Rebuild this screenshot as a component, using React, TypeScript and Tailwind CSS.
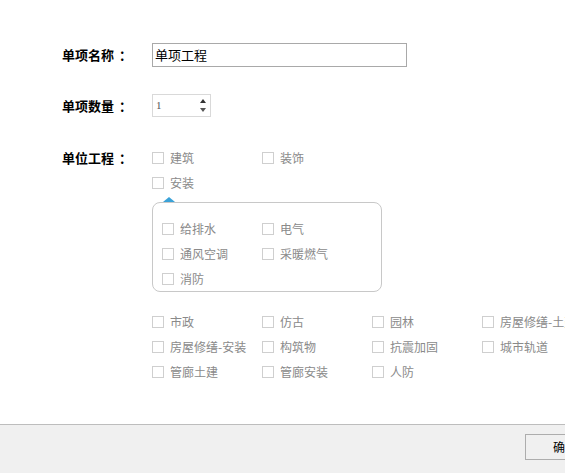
import React from 'react';

const font = { fontFamily: '"Noto Sans CJK SC", "Noto Sans", sans-serif' };

function Check({ label, w = 'w-[110px]' }: { label: string; w?: string }) {
  return (
    <label className={`flex h-[25px] ${w} shrink-0 items-center whitespace-nowrap text-[12px] text-[#8a8a8a]`}>
      <span className="mr-[6px] h-[12px] w-[12px] shrink-0 border border-[#cfcfcf] bg-white" />
      {label}
    </label>
  );
}

function FieldLabel({ text }: { text: string }) {
  return (
    <div className="flex w-[90px] shrink-0 items-center text-[13px] font-bold text-black">
      {text}
      <span className="ml-[5px]">：</span>
    </div>
  );
}

const topItems = ['建筑', '装饰', '安装'];
const installItems = ['给排水', '电气', '通风空调', '采暖燃气', '消防'];
const otherItems = [
  '市政', '仿古', '园林', '房屋修缮-土建',
  '房屋修缮-安装', '构筑物', '抗震加固', '城市轨道',
  '管廊土建', '管廊安装', '人防',
];

export default function App() {
  return (
    <div className="flex h-[473px] w-[565px] flex-col overflow-hidden bg-white" style={font}>
      <div className="flex-1 pl-[62px] pt-[43px]">
        {/* 单项名称 */}
        <div className="flex items-center">
          <FieldLabel text="单项名称" />
          <div className="flex h-[24px] w-[255px] items-center border border-[#a9a9a9] px-[2px] text-[13px] text-black">
            单项工程
          </div>
        </div>

        {/* 单项数量 */}
        <div className="mt-[27px] flex items-center">
          <FieldLabel text="单项数量" />
          <div className="flex h-[23px] w-[59px] items-center justify-between border border-[#d9d9d9] pl-[3px] pr-[4px]">
            <span className="text-[11px] text-[#555]" style={{ fontFamily: '"Liberation Serif", serif' }}>1</span>
            <div className="flex flex-col gap-[5px]">
              <span className="h-0 w-0 border-x-[3px] border-b-[4px] border-x-transparent border-b-[#333]" />
              <span className="h-0 w-0 border-x-[3px] border-t-[4px] border-x-transparent border-t-[#555]" />
            </div>
          </div>
        </div>

        {/* 单位工程 */}
        <div className="mt-[28px] flex items-start">
          <div className="flex h-[25px] items-center">
            <FieldLabel text="单位工程" />
          </div>
          <div className="flex flex-col">
            <div className="grid w-[220px] grid-cols-2">
              {topItems.map((t) => (
                <Check key={t} label={t} />
              ))}
            </div>

            <div className="relative mt-[7px] w-[230px] rounded-[8px] border border-[#c8c8c8] pl-[9px] pt-[13px]">
              <span className="absolute -top-[6px] left-[10px] h-0 w-0 border-x-[6px] border-b-[5px] border-x-transparent border-b-[#3aa2d8]" />
              <div className="grid w-[200px] grid-cols-2">
                {installItems.map((t) => (
                  <Check key={t} label={t} w="w-[100px]" />
                ))}
              </div>
            </div>

            <div className="mt-[17px] grid w-[440px] grid-cols-4">
              {otherItems.map((t) => (
                <Check key={t} label={t} />
              ))}
            </div>
          </div>
        </div>
      </div>

      {/* footer */}
      <div className="flex h-[49px] shrink-0 border-t border-[#bdbdbd] bg-[#f0f0f0] pl-[525px] pt-[9px]">
        <button className="h-[26px] w-[80px] shrink-0 border border-[#adadad] bg-[#f0f0f0] text-[12px] text-black">
          确定
        </button>
      </div>
    </div>
  );
}
